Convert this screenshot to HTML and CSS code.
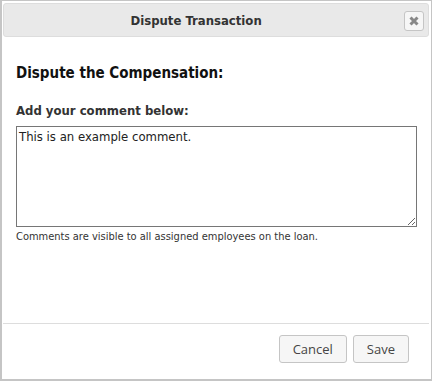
FILE: index.html
```html
<!DOCTYPE html>
<html lang="en">
<head>
    <meta charset="UTF-8">
    <meta name="viewport" content="width=device-width, initial-scale=1.0">
    <title>Dispute Transaction</title>
    <link rel="stylesheet" href="styles.css">
</head>
<body>
    <div class="dialog">
        <div class="titlebar">
            <span class="title">Dispute Transaction</span>
            <button class="close" type="button" title="Close">
                <svg width="10" height="10" viewBox="0 0 10 10">
                    <path d="M1.5 1.5 L8.5 8.5 M8.5 1.5 L1.5 8.5" stroke="#888" stroke-width="3" stroke-linecap="butt"/>
                </svg>
            </button>
        </div>

        <div class="content">
            <h3>Dispute the Compensation:</h3>
            <label for="comment">Add your comment below:</label>
            <textarea id="comment">This is an example comment.</textarea>
            <p class="hint">Comments are visible to all assigned employees on the loan.</p>
        </div>

        <div class="buttonpane">
            <button type="button">Cancel</button>
            <button type="button">Save</button>
        </div>
    </div>
</body>
</html>
```

FILE: styles.css
```css
body {
    margin: 0;
    padding: 0;
    font-family: "DejaVu Sans Condensed", "DejaVu Sans", sans-serif;
    color: #333;
    background: #fff;
}

.dialog {
    width: 432px;
    height: 381px;
    box-sizing: border-box;
    border: 1px solid #c5c5c5;
    border-left-width: 2px;
    border-bottom-width: 2px;
    padding: 2px 2px 0 1px;
    display: flex;
    flex-direction: column;
}

/* Barra de título */
.titlebar {
    height: 34px;
    box-sizing: border-box;
    padding: 0 13px;
    background: #e9e9e9;
    border: 1px solid #dddddd;
    border-radius: 3px;
    display: flex;
    align-items: center;
    position: relative;
}

.title {
    width: 90%;
    text-align: center;
    font-weight: bold;
    font-size: 13px;
    color: #333;
}

.titlebar .close {
    position: absolute;
    right: 4px;
    top: 7px;
    width: 20px;
    height: 20px;
    padding: 0;
    background: #f6f6f6;
    border: 1px solid #c5c5c5;
    border-radius: 3px;
    display: flex;
    align-items: center;
    justify-content: center;
}

/* Contenido */
.content {
    flex: 1;
    padding: 0 12px 0 13px;
}

.content h3 {
    margin: 27px 0 0 0;
    font-size: 15px;
    line-height: 18px;
    color: #111;
}

.content label {
    display: block;
    margin-top: 21px;
    font-weight: bold;
    font-size: 13px;
    line-height: 16px;
    color: #333;
}

.content textarea {
    display: block;
    margin-top: 7px;
    width: 401px;
    height: 101px;
    box-sizing: border-box;
    border: 1px solid #767676;
    padding: 2px;
    font-family: "DejaVu Sans Condensed", "DejaVu Sans", sans-serif;
    font-size: 13px;
    color: #222;
}

.hint {
    margin: 3px 0 0 0;
    font-size: 11px;
    line-height: 13px;
    color: #333;
}

/* Botones */
.buttonpane {
    border-top: 1px solid #dddddd;
    padding: 11px 20px 16px 0;
    display: flex;
    justify-content: flex-end;
    gap: 6px;
}

.buttonpane button {
    height: 28px;
    padding: 0 13px;
    background: #f6f6f6;
    border: 1px solid #c5c5c5;
    border-radius: 3px;
    font-family: "Open Sans", sans-serif;
    font-size: 13px;
    color: #454545;
}
```
